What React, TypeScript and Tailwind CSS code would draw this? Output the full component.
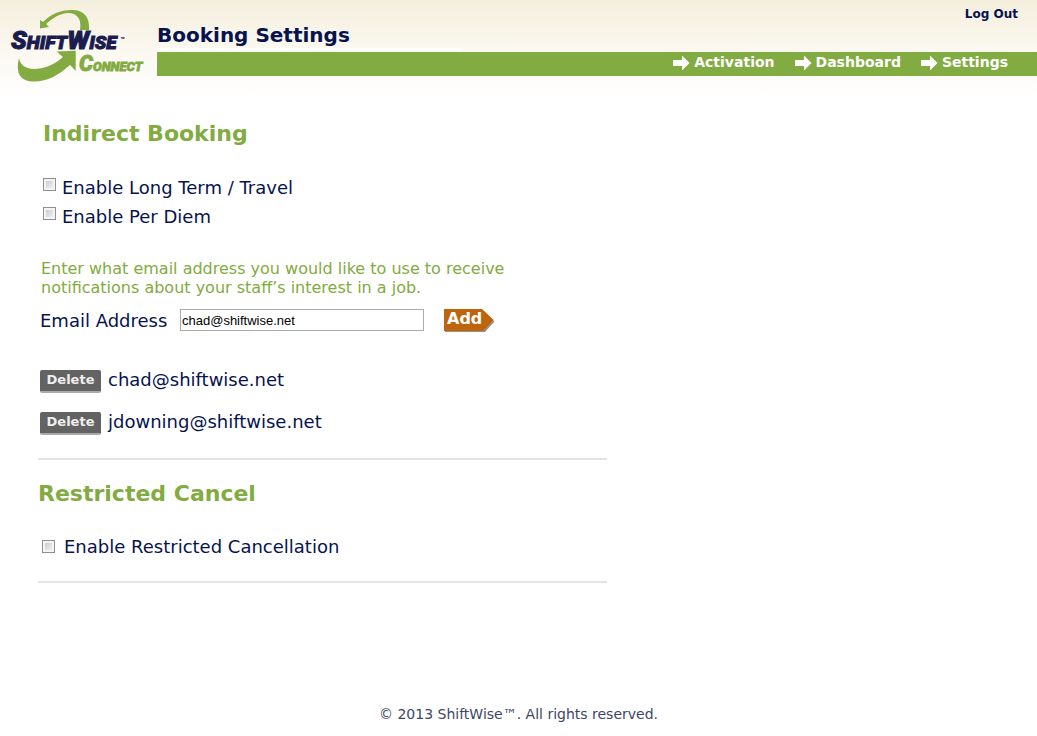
import { useState, type ReactNode } from "react";

const navLinks = ["Activation", "Dashboard", "Settings"];
const savedEmails = ["chad@shiftwise.net", "jdowning@shiftwise.net"];

function Logo() {
  return (
    <svg width="157" height="90" viewBox="0 0 157 90" role="img" aria-label="ShiftWise Connect" className="shrink-0">
      {/* upper swoosh */}
      <path
        d="M40 20 L43 22 C51 14 60 10 72 10 C84 10 90 17 89 30 H80 C82 19 77 13 68 13 C60 13 53 18 46 24 L49 27 L40 28.5 Z"
        fill="#82ab41"
      />
      {/* lower swoosh */}
      <path
        d="M19 58 C20 65 26 69 34 69 C44 69 54 65 63 57 L56.5 51.5 L75.7 50.7 V70.7 L70 65 C58 76 46 81.5 34 81.5 C21 81.5 15 74 19 58 Z"
        fill="#82ab41"
      />
      <g
        fontFamily="Roboto, 'Liberation Sans', sans-serif"
        fontWeight="900"
        fontStyle="italic"
        fill="#1a1c50"
        stroke="#1a1c50"
        strokeWidth="1"
      >
        <text x="11" y="49">
          <tspan fontSize="26">S</tspan>
          <tspan fontSize="19">HIFT</tspan>
          <tspan fontSize="26">W</tspan>
          <tspan fontSize="19">ISE</tspan>
        </text>
        <text x="120" y="42" fontSize="7" strokeWidth="0">
          ™
        </text>
      </g>
      <text
        x="79"
        y="71"
        fill="#82ab41"
        stroke="#82ab41"
        strokeWidth="0.8"
        fontFamily="Roboto, 'Liberation Sans', sans-serif"
        fontWeight="900"
        fontStyle="italic"
      >
        <tspan fontSize="22">C</tspan>
        <tspan fontSize="13">ONNECT</tspan>
      </text>
    </svg>
  );
}

function ArrowIcon() {
  return (
    <svg width="17" height="16" viewBox="0 0 17 16" fill="#fff" aria-hidden="true">
      <path d="M0 5 H9 V0.5 L16.5 8 L9 15.5 V11 H0 Z" />
    </svg>
  );
}

function Option({ id, centered, children }: { id: string; centered?: boolean; children: ReactNode }) {
  return (
    <div className={centered ? "flex h-[29px] items-center gap-[9px]" : "flex h-[29px] items-start gap-[6px] pt-[5px]"}>
      <input
        id={id}
        type="checkbox"
        className="size-[13px] shrink-0 appearance-none border border-[#8e8f8f] bg-linear-to-br from-[#c3c6cb] to-[#f6f6f6] shadow-[inset_0_0_0_2px_#f4f4f4] checked:from-[#10184e] checked:to-[#10184e]"
      />
      <label htmlFor={id} className="text-[18px] leading-[20px]">
        {children}
      </label>
    </div>
  );
}

export default function App() {
  const [email, setEmail] = useState("chad@shiftwise.net");
  const [emails, setEmails] = useState(savedEmails);

  return (
    <div className="min-h-screen bg-white font-['DejaVu_Sans',Verdana,sans-serif] text-[#06134f]">
      {/* Header */}
      <header className="flex h-[100px] bg-linear-to-b from-[#f4eedc] via-[#fbf8f0] to-white">
        <Logo />
        <div className="flex-1">
          <div className="flex h-[52px] justify-between pr-[19px]">
            <h1 className="h-[50px] w-[306px] border-b-2 border-white pt-[22px] text-[20px] leading-[26px] font-bold">
              Booking Settings
            </h1>
            <a href="#logout" className="pt-[6px] text-[12px] leading-[16px] font-bold">
              Log Out
            </a>
          </div>
          <nav className="flex h-6 justify-end gap-5 bg-[#82ab41] pr-[29px]">
            {navLinks.map((name) => (
              <a
                key={name}
                href={`#${name.toLowerCase()}`}
                className="flex h-[22px] items-center gap-1 text-[14px] leading-[20px] font-bold text-white"
              >
                <ArrowIcon />
                <span className="pb-[2px]">{name}</span>
              </a>
            ))}
          </nav>
        </div>
      </header>

      <main className="max-w-[607px] pl-[38px]">
        {/* Indirect booking */}
        <section className="border-b-2 border-[#e3e3e3] pb-[22px]">
          <h2 className="pt-[19px] pl-[5px] text-[22px] leading-[30px] font-bold text-[#82ab41]">Indirect Booking</h2>
          <div className="mt-[24px] pl-[5px]">
            <Option id="long-term">Enable Long Term / Travel</Option>
            <Option id="per-diem">Enable Per Diem</Option>
          </div>

          <p className="mt-[28px] max-w-[500px] pl-[3px] text-[16px] leading-[19px] text-[#82ab41]">
            Enter what email address you would like to use to receive notifications about your staff’s interest in a job.
          </p>
          <form
            className="mt-3 flex h-6 pl-[2px]"
            onSubmit={(e) => {
              e.preventDefault();
              setEmails([...emails, email]);
            }}
          >
            <label htmlFor="email" className="w-[140px] text-[18px] leading-[24px]">
              Email Address
            </label>
            <input
              id="email"
              type="text"
              value={email}
              onChange={(e) => setEmail(e.target.value)}
              className="h-[22px] w-[244px] border border-[#abadb3] bg-white px-px font-['Liberation_Sans',Arial,sans-serif] text-[13px] text-black"
            />
            <button
              type="submit"
              className="relative ml-5 flex h-6 w-[51px] pl-[3px] text-[16px] leading-[20px] font-bold text-white"
            >
              <svg width="51" height="24" viewBox="0 0 51 24" className="absolute inset-0" aria-hidden="true">
                <path d="M1 2 H40 L50.5 12.5 L41 23 H1 Z" fill="#777" opacity="0.8" />
                <path d="M0 0 H38 L49.5 11 L39 22 H0 Z" fill="#bf640d" />
              </svg>
              <span className="relative">Add</span>
            </button>
          </form>

          <ul className="mt-[37px] flex flex-col gap-[18px] pl-[2px]">
            {emails.map((item) => (
              <li key={item} className="flex h-6 gap-[7px]">
                <button
                  type="button"
                  onClick={() => setEmails(emails.filter((e) => e !== item))}
                  className="h-[23px] w-[61px] rounded-[2px] border-b-2 border-[#aaa] bg-[#636363] pb-px text-[13px] leading-[20px] font-bold text-[#eee]"
                >
                  Delete
                </button>
                <span className="text-[18px] leading-[20px]">{item}</span>
              </li>
            ))}
          </ul>
        </section>

        {/* Restricted cancel */}
        <section className="border-b-2 border-[#e3e3e3] pb-[20px]">
          <h2 className="pt-[19px] text-[22px] leading-[30px] font-bold text-[#82ab41]">Restricted Cancel</h2>
          <div className="mt-[23px] pl-1">
            <Option id="restricted" centered>
              Enable Restricted Cancellation
            </Option>
          </div>
        </section>
      </main>

      <footer className="pt-[121px] text-center text-[14px] leading-[20px] text-[#3d4664]">
        © 2013 ShiftWise™. All rights reserved.
      </footer>
    </div>
  );
}
